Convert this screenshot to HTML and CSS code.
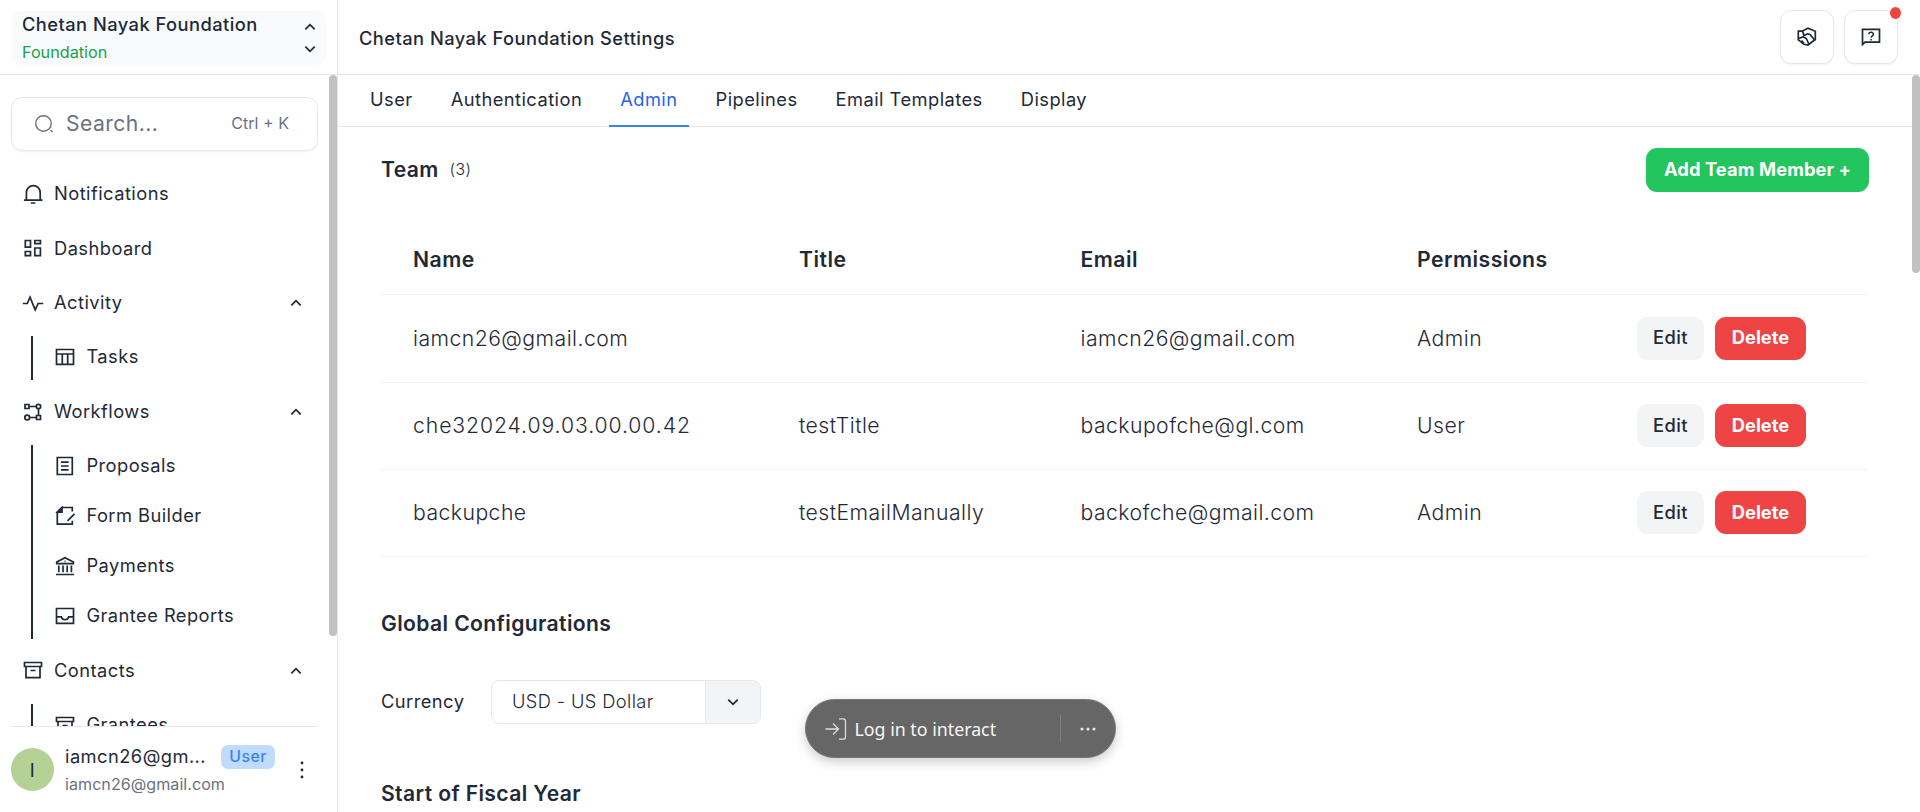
FILE: index.html
```html
<!DOCTYPE html>
<html lang="en">
<head>
<meta charset="utf-8">
<title>Chetan Nayak Foundation Settings</title>
<link rel="stylesheet" href="styles.css">
</head>
<body>
<svg class="defs" width="0" height="0">
  <symbol id="up" viewBox="0 0 24 24"><path d="M4 16l8-8 8 8" fill="none" stroke="currentColor" stroke-width="3"/></symbol>
  <symbol id="down" viewBox="0 0 24 24"><path d="M4 8l8 8 8-8" fill="none" stroke="currentColor" stroke-width="3"/></symbol>
  <symbol id="archive" viewBox="0 0 22 22"><path d="M2.500 3.500h17v4h-17zM4 7.500V18.700h14V7.500M8.500 11.500h5" fill="none" stroke="currentColor" stroke-width="1.700"/></symbol>
</svg>
<div class="app">
  <aside class="side">
    <div class="side-head">
      <div class="org">
        <div class="org-text"><div class="org-name">Chetan Nayak Foundation</div><div class="org-type">Foundation</div></div>
        <div class="org-arrows"><svg class="chev"><use href="#up"/></svg><svg class="chev"><use href="#down"/></svg></div>
      </div>
    </div>
    <div class="side-scroll">
      <div class="search">
        <svg class="ic" viewBox="0 0 22 22"><circle cx="10.500" cy="10.500" r="7.800" fill="none" stroke="currentColor" stroke-width="1.400"/><path d="M17.500 17l2 2" stroke="currentColor" stroke-width="1.500"/></svg>
        <span class="search-text">Search...</span><span class="kbd">Ctrl + K</span>
      </div>
      <nav class="nav">
        <a class="row"><svg class="ic line" viewBox="0 0 22 22"><path d="M4.400 17V9.600a6.900 6.900 0 0 1 13.800 0V17M1.900 17.200h18.600M8.800 20h4.600"/></svg><span>Notifications</span></a>
        <a class="row"><svg class="ic line" viewBox="0 0 22 22"><path d="M3.300 3.500h5.200v6.700H3.300zM12.800 3.500h5.600v3.200h-5.600zM12.800 11h5.600v7.600h-5.600zM3.300 14.500h5.200v4.100H3.300z"/></svg><span>Dashboard</span></a>
        <a class="row"><svg class="ic line" viewBox="0 0 22 22"><path d="M.8 11.500h4.500L8 5.200l5.200 12.700 3-6.400h5"/></svg><span>Activity</span><svg class="chev"><use href="#up"/></svg></a>
        <div class="sub"><i class="rail"></i><div class="sub-list">
          <a class="row"><svg class="ic line" viewBox="0 0 22 22"><path d="M2.500 3.500h17v14.800h-17zM2.500 8h17M8.300 8v10M13.700 8v10"/></svg><span>Tasks</span></a>
        </div></div>
        <a class="row"><svg class="ic line" viewBox="0 0 22 22"><path d="M3 3.500h4v4H3zM14.500 14.500h4v4h-4zM7 5.500h7.200M16.500 8v6.500M8 16.500h6.500"/><circle cx="16.500" cy="5.500" r="2.200"/><circle cx="5.200" cy="16.500" r="2.400"/></svg><span>Workflows</span><svg class="chev"><use href="#up"/></svg></a>
        <div class="sub"><i class="rail"></i><div class="sub-list">
          <a class="row"><svg class="ic line" viewBox="0 0 22 22"><path d="M3.300 2.500h15v17h-15zM7 7.200h7.600M7 11h7.600M7 14.800h7.600"/></svg><span>Proposals</span></a>
          <a class="row"><svg class="ic line" viewBox="0 0 22 22"><path d="M18.300 6.500V2.500H8L3.300 7.200v12h15v-3.500M20.500 8.800l-7 7"/><path d="M8 2.500v4.700H3.300z" fill="currentColor"/></svg><span>Form Builder</span></a>
          <a class="row"><svg class="ic line" viewBox="0 0 22 22"><path d="M2 19.500h18M2.700 8.600V7L11 2.700 19.400 7v1.600zM4.800 10.500v6.800M9 10.500v6.800M13.200 10.500v6.800M17.400 10.500v6.800M10.500 6.300h1"/></svg><span>Payments</span></a>
          <a class="row"><svg class="ic line" viewBox="0 0 22 22"><path d="M2.500 3.500h17v14.800h-17zM2.500 11.800h4.800a3.800 3.800 0 0 0 7.400 0h4.800"/></svg><span>Grantee Reports</span></a>
        </div></div>
        <a class="row"><svg class="ic"><use href="#archive"/></svg><span>Contacts</span><svg class="chev"><use href="#up"/></svg></a>
        <div class="sub"><i class="rail"></i><div class="sub-list">
          <a class="row"><svg class="ic"><use href="#archive"/></svg><span>Grantees</span></a>
        </div></div>
      </nav>
      <i class="thumb side-thumb"></i>
    </div>
    <div class="profile">
      <div class="avatar">I</div>
      <div class="who"><div class="who-top"><span class="who-name">iamcn26@gm...</span><span class="badge">User</span></div><div class="who-mail">iamcn26@gmail.com</div></div>
      <svg class="dots" viewBox="0 0 4 18"><circle cx="2" cy="2" r="1.400"/><circle cx="2" cy="9" r="1.400"/><circle cx="2" cy="16" r="1.400"/></svg>
    </div>
  </aside>
  <main class="main">
    <header class="head">
      <h1 class="title">Chetan Nayak Foundation Settings</h1>
      <div class="tools">
        <button class="tool"><svg class="ic line" viewBox="0 0 22 22"><path d="M2.300 5.200L6.500 5l5.500-2.700 7.300 3V13.500L12 19 8 18.300 2.300 13.800zM6.500 5L8 9.500l3.500-1.700 2.500.7 4.500 5.500M2.800 12.500l4.500-1.700 3 1.700 2.500 5.500M5.500 14.500l2.500 3"/></svg></button>
        <button class="tool"><svg class="ic line" viewBox="0 0 22 22"><path d="M2.500 18.500V3.300h17V16.200H5z"/><path d="M8.800 8.200c0-2.700 4.700-2.600 4.600.1 0 1.600-2.300 1.600-2.300 3.400M11.100 13v1.600" stroke-width="1.500"/></svg><i class="alert"></i></button>
      </div>
    </header>
    <div class="body">
      <nav class="tabs"><a class="tab">User</a><a class="tab">Authentication</a><a class="tab on">Admin</a><a class="tab">Pipelines</a><a class="tab">Email Templates</a><a class="tab">Display</a></nav>
      <section class="content">
        <div class="team"><h2 class="h2">Team</h2><span class="count">(3)</span><button class="add">Add Team Member +</button></div>
        <div class="table">
          <div class="tr th"><span>Name</span><span>Title</span><span>Email</span><span>Permissions</span></div>
          <div class="tr first"><span>iamcn26@gmail.com</span><span></span><span>iamcn26@gmail.com</span><span>Admin</span><div class="acts"><button class="btn">Edit</button><button class="btn del">Delete</button></div></div>
          <div class="tr"><span class="digits">che32024.09.03.00.00.42</span><span>testTitle</span><span>backupofche@gl.com</span><span>User</span><div class="acts"><button class="btn">Edit</button><button class="btn del">Delete</button></div></div>
          <div class="tr"><span>backupche</span><span>testEmailManually</span><span>backofche@gmail.com</span><span>Admin</span><div class="acts"><button class="btn">Edit</button><button class="btn del">Delete</button></div></div>
        </div>
        <h2 class="h2 global">Global Configurations</h2>
        <div class="field"><span class="label">Currency</span><div class="select"><span class="value">USD - US Dollar</span><span class="drop"><svg class="chev"><use href="#down"/></svg></span></div></div>
        <h2 class="h2 fiscal">Start of Fiscal Year</h2>
      </section>
      <i class="thumb main-thumb"></i>
    </div>
  </main>
</div>
<div class="login"><svg class="enter" viewBox="0 0 22 22"><path d="M.5 11h13M8 5.500l5.500 5.500L8 16.500M14 .8h4.200q2.300 0 2.300 2.300v15.800q0 2.300-2.300 2.300H14"/></svg><span class="login-text">Log in to interact</span><i class="sep"></i><svg class="more" viewBox="0 0 16 4"><circle cx="2" cy="2" r="1.600"/><circle cx="8" cy="2" r="1.600"/><circle cx="14" cy="2" r="1.600"/></svg></div>
</body>
</html>
```
FILE: styles.css
```css
* { box-sizing: border-box; }
html, body { margin: 0; height: 100%; overflow: hidden; }
body { font-family: Inter, "Liberation Sans", sans-serif; font-size: 18.3px; color: #1f2937; background: #fff; letter-spacing: .025em; }
button { font: inherit; letter-spacing: inherit; color: inherit; border: 0; padding: 0; }
.defs { position: absolute; }
.app { display: flex; height: 812px; }
.ic { width: 22px; height: 22px; flex: none; }
.line { fill: none; stroke: currentColor; stroke-width: 1.7; }
.chev { width: 14px; height: 14px; flex: none; }

.side { width: 338px; border-right: 1px solid #e5e7eb; display: flex; flex-direction: column; }
.side-head { height: 75px; flex: none; border-bottom: 1px solid #e5e7eb; padding: 11px 11px 0; }
.org { height: 54px; width: 315px; background: #f9fafb; border-radius: 11px; padding: 0 9px 0 11px; display: flex; justify-content: space-between; }
.org-name { font-weight: 500; line-height: 26px; }
.org-type { font-size: 16.2px; line-height: 22px; margin-top: 4px; color: #16a34a; letter-spacing: 0; }
.org-arrows { display: flex; flex-direction: column; justify-content: space-between; padding: 9px 0 9px; }
.side-scroll { position: relative; height: 651px; overflow: hidden; padding: 22px 19px 0 11px; flex: none; }
.search { height: 54px; border: 1px solid #e5e7eb; border-radius: 11px; box-shadow: 0 1px 2px rgba(0,0,0,.06); display: flex; align-items: center; padding: 0 28px 0 21px; color: #6b7280; }
.search-text { font-size: 21.1px; margin-left: 11px; padding-bottom: 2px; }
.kbd { margin-left: auto; font-size: 16.1px; letter-spacing: 0; padding-bottom: 2px; }
.nav { padding: 18px 0 0 11px; display: flex; flex-direction: column; gap: 4.400px; }
.row { display: flex; align-items: center; height: 50px; gap: 10px; }
.row > span { padding-bottom: 1.500px; }
.row > .chev { margin-left: auto; margin-right: 15px; margin-top: 1px; }
.sub { display: flex; }
.rail { width: 2px; margin: 4px 0 2px 9.400px; background: #1f2937; }
.sub-list { margin-left: 21px; flex: 1; }
.thumb { position: absolute; width: 8px; background: #c1c1c1; border-radius: 4px; top: 0; right: 0; }
.side-thumb { height: 561px; }
.profile { margin: 0 19px 0 11px; border-top: 1px solid #e5e7eb; height: 86px; display: flex; align-items: center; }
.avatar { width: 43px; height: 43px; border-radius: 50%; background: #b5d195; display: flex; align-items: center; justify-content: center; }
.who { margin-left: 11px; width: 210px; }
.who-top { display: flex; justify-content: space-between; align-items: center; height: 25px; }
.who-name { padding-bottom: 2px; }
.badge { background: #bfdbfe; color: #3b82f6; font-size: 15.8px; font-weight: 500; width: 54px; text-align: center; height: 24px; line-height: 24px; border-radius: 7px; }
.who-mail { font-size: 16.1px; color: #6b7280; line-height: 22px; margin-top: 4px; letter-spacing: .002em; }
.dots { width: 4px; height: 18px; margin-left: 25px; fill: currentColor; }

.main { flex: 1; }
.head { height: 75px; border-bottom: 1px solid #e5e7eb; display: flex; align-items: center; justify-content: space-between; padding: 0 22px 0 21px; }
.title { margin: 0; padding-top: 1px; font-size: 18.3px; font-weight: 500; }
.tools { display: flex; gap: 10px; }
.tool { position: relative; width: 54px; height: 54px; background: #fff; border: 1px solid #e5e7eb; border-radius: 11px; box-shadow: 0 1px 2px rgba(0,0,0,.05); display: flex; align-items: center; justify-content: center; }
.alert { position: absolute; top: -4px; right: -4px; width: 11px; height: 12px; border-radius: 50%; background: #ef4444; }
.body { position: relative; height: 737px; overflow: hidden; }
.tabs { display: flex; height: 52px; border-bottom: 1px solid #e5e7eb; padding-left: 21px; margin-right: 8px; gap: 16px; }
.tab { height: 52px; padding: 0 11px; line-height: 48px; }
.on { color: #2563eb; border-bottom: 2px solid #3b82f6; }
.content { padding: 21px 51px 0 43px; }
.team { display: flex; align-items: center; height: 44px; }
.h2 { margin: 0; font-size: 21.1px; font-weight: 600; line-height: 31px; letter-spacing: .018em; }
.team .h2 { padding-bottom: 2px; }
.count { margin-left: 11px; font-size: 15.8px; font-weight: 300; padding-bottom: 1px; }
.add { margin-left: auto; width: 223px; height: 44px; padding-bottom: 2px; border-radius: 11px; background: #22c55e; color: #fff; font-weight: 700; letter-spacing: .006em; }
.table { margin-top: 32px; }
.tr { display: grid; grid-template-columns: 386px 281.500px 336.500px 220px 1fr; align-items: center; height: 87px; padding-left: 32px; border-bottom: 1px solid #f3f4f6; font-size: 21.2px; font-weight: 300; }
.tr > span { padding-bottom: 1.500px; }
.th { height: 71px; font-weight: 600; }
.th > span { padding-bottom: 0; }
.first { height: 88px; }
.digits { letter-spacing: .043em; }
.acts { display: flex; gap: 11px; padding-bottom: 1px; }
.btn { width: 67px; height: 43px; padding-bottom: 2px; border-radius: 11px; background: #f3f4f6; font-size: 18.3px; font-weight: 500; }
.del { width: 91px; background: #ef4444; color: #fff; font-weight: 700; letter-spacing: 0; }
.global { margin-top: 51px; }
.field { display: flex; align-items: center; margin-top: 41px; height: 44px; }
.label { width: 110px; padding-bottom: 2px; }
.select { width: 270px; height: 44px; border: 1px solid #e5e7eb; border-radius: 8px; display: flex; overflow: hidden; }
.value { flex: 1; padding-left: 20px; line-height: 40px; font-weight: 300; letter-spacing: .021em; }
.drop { width: 55px; background: #f3f4f6; border-left: 1px solid #e5e7eb; display: flex; align-items: center; justify-content: center; }
.fiscal { margin-top: 54px; }
.main-thumb { height: 198px; }

.login { position: absolute; left: 805px; top: 699px; width: 311px; height: 59px; border-radius: 30px; background: #666; border: 1px solid #777; box-shadow: 0 4px 12px rgba(0,0,0,.2); display: flex; align-items: center; padding-left: 19px; color: #f5f5f5; font-family: "Noto Sans", sans-serif; font-size: 17.8px; letter-spacing: 0; }
.enter { width: 22px; height: 22px; fill: none; stroke: #ddd; stroke-width: 1.3; }
.login-text { margin-left: 7.500px; width: 205px; }
.sep { width: 1px; height: 27px; background: #808080; }
.more { width: 16px; height: 4px; margin-left: 19px; fill: #e5e5e5; }
```
